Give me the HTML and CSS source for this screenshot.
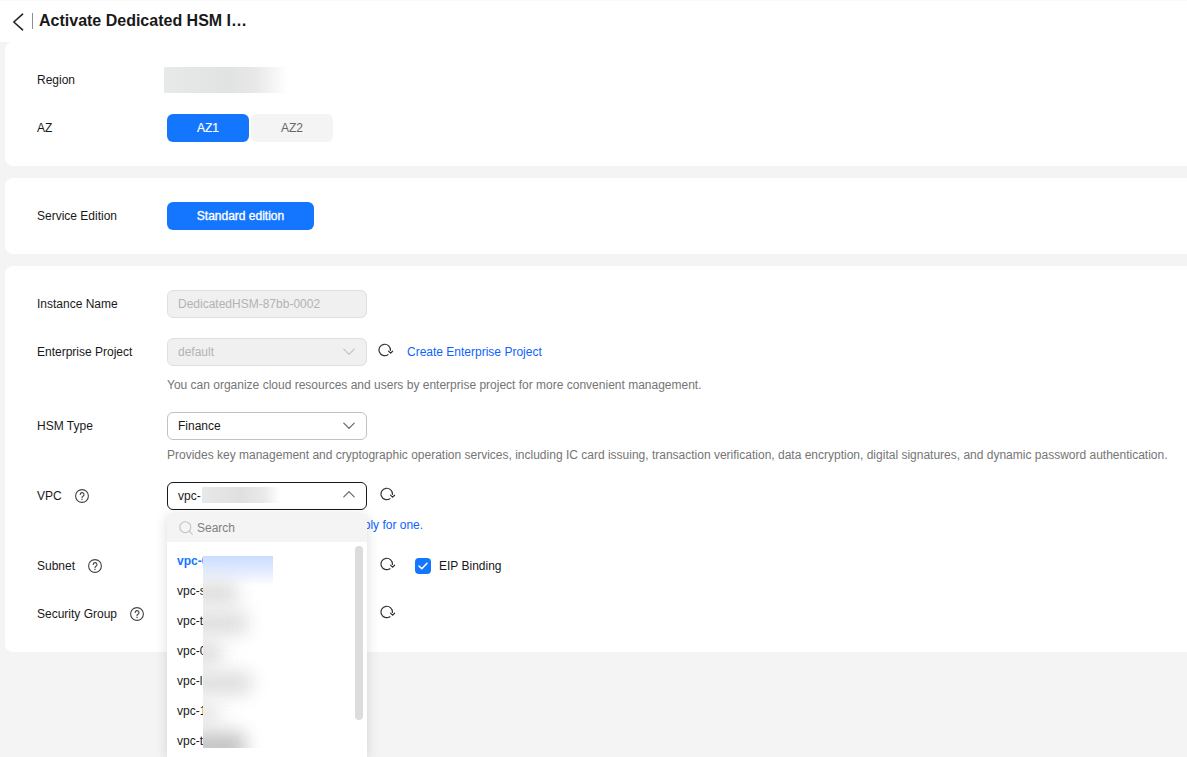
FILE: index.html
```html
<!DOCTYPE html>
<html lang="en">
<head>
<meta charset="utf-8">
<title>Activate Dedicated HSM Instance</title>
<link rel="stylesheet" href="styles.css">
</head>
<body>
<svg class="defs" width="0" height="0" aria-hidden="true">
  <symbol id="refresh" viewBox="0 0 16 16">
    <path d="M9.9 12.7A5.7 5.7 0 1 1 12.4 8.5" fill="none" stroke="currentColor" stroke-width="1.2" stroke-linecap="round"/>
    <path d="M10.5 9.2L12.5 11.2L14.6 9.2" fill="none" stroke="currentColor" stroke-width="1.2" stroke-linecap="round" stroke-linejoin="round"/>
  </symbol>
  <symbol id="down" viewBox="0 0 12 8">
    <path d="M.8 1.2L6 6.4L11.2 1.2" fill="none" stroke="currentColor" stroke-width="1.2" stroke-linecap="round" stroke-linejoin="round"/>
  </symbol>
  <symbol id="help" viewBox="0 0 14 14">
    <circle cx="7" cy="7" r="6.4" fill="none" stroke="currentColor" stroke-width="1.1"/>
    <path d="M5.2 5.5A1.9 1.9 0 1 1 8 7.2C7.3 7.6 7 8 7 8.7" fill="none" stroke="currentColor" stroke-width="1.1" stroke-linecap="round"/>
    <circle cx="7" cy="10.4" r=".7" fill="currentColor"/>
  </symbol>
</svg>

<header class="topbar">
  <svg class="back" width="12" height="18" viewBox="0 0 12 18"><path d="M10.6 1.2L1.8 9L10.6 16.8" fill="none" stroke="currentColor" stroke-width="1.6" stroke-linecap="round" stroke-linejoin="round"/></svg>
  <span class="divider"></span>
  <h1 class="title">Activate Dedicated HSM Instance</h1>
</header>

<main class="page">
  <section class="card">
    <div class="row">
      <div class="label">Region</div>
      <div class="region-mask"></div>
    </div>
    <div class="row">
      <div class="label">AZ</div>
      <div class="segments">
        <button class="seg seg-on">AZ1</button>
        <button class="seg">AZ2</button>
      </div>
    </div>
  </section>

  <section class="card">
    <div class="row">
      <div class="label">Service Edition</div>
      <button class="seg seg-on seg-wide">Standard edition</button>
    </div>
  </section>

  <section class="card">
    <div class="row">
      <div class="label">Instance Name</div>
      <div class="field field-off">DedicatedHSM-87bb-0002</div>
    </div>

    <div class="item">
      <div class="row">
        <div class="label">Enterprise Project</div>
        <div class="field field-off">default<svg class="caret"><use href="#down"/></svg></div>
        <svg class="refresh refresh-near"><use href="#refresh"/></svg>
        <a class="link create">Create Enterprise Project</a>
      </div>
      <p class="help help-wide">You can organize cloud resources and users by enterprise project for more convenient management.</p>
    </div>

    <div class="item">
      <div class="row">
        <div class="label">HSM Type</div>
        <div class="field">Finance<svg class="caret"><use href="#down"/></svg></div>
      </div>
      <p class="help">Provides key management and cryptographic operation services, including IC card issuing, transaction verification, data encryption, digital signatures, and dynamic password authentication.</p>
    </div>

    <div class="item">
      <div class="row">
        <div class="label">VPC<svg class="qmark"><use href="#help"/></svg></div>
        <div class="field field-open">vpc-<span class="vpc-mask"></span><svg class="caret caret-up"><use href="#down"/></svg>
          <div class="dropdown">
            <div class="search">
              <svg class="search-icon" width="14" height="14" viewBox="0 0 14 14"><circle cx="6.3" cy="6.3" r="5.5" fill="none" stroke="currentColor" stroke-width="1.1"/><path d="M10.3 10.3L13.2 13.2" stroke="currentColor" stroke-width="1.1" stroke-linecap="round"/></svg>
              Search
            </div>
            <ul class="options">
              <li class="option option-on">vpc-0</li>
              <li class="option">vpc-s</li>
              <li class="option">vpc-t</li>
              <li class="option">vpc-0</li>
              <li class="option">vpc-l</li>
              <li class="option">vpc-1</li>
              <li class="option">vpc-t</li>
            </ul>
            <div class="thumb"></div>
            <div class="blur-mask">
              <div class="tint"></div>
              <div class="blob b1"></div>
              <div class="blob b2"></div>
              <div class="blob b3"></div>
              <div class="blob b4"></div>
              <div class="blob b5"></div>
              <div class="blob b6"></div>
            </div>
          </div>
        </div>
        <svg class="refresh"><use href="#refresh"/></svg>
      </div>
      <p class="help help-link">No VPC is available? click here to apply for one.</p>
    </div>

    <div class="row">
      <div class="label">Subnet<svg class="qmark"><use href="#help"/></svg></div>
      <div class="field"></div>
      <svg class="refresh"><use href="#refresh"/></svg>
      <label class="check">
        <span class="box"><svg width="10" height="8" viewBox="0 0 10 8"><path d="M1 4L3.8 6.8L9 1.2" fill="none" stroke="#fff" stroke-width="1.5" stroke-linecap="round" stroke-linejoin="round"/></svg></span>
        EIP Binding
      </label>
    </div>

    <div class="row">
      <div class="label">Security Group<svg class="qmark"><use href="#help"/></svg></div>
      <div class="field"></div>
      <svg class="refresh"><use href="#refresh"/></svg>
    </div>
  </section>
</main>
</body>
</html>
```

FILE: styles.css
```css
* { box-sizing: border-box; }

html, body { height: 100%; }

body {
  margin: 0;
  overflow: hidden;
  background: #f4f4f4;
  color: #191919;
  font: 12px/20px "Liberation Sans", Arial, sans-serif;
}

.defs { display: block; height: 0; }

.topbar {
  display: flex;
  align-items: center;
  height: 42px;
  padding: 0 0 0 12px;
  background: #fff;
  border-top: 1px solid #fafafa;
}

.back { color: #222; flex: none; }

.divider {
  width: 1px;
  height: 16px;
  margin: -1px 6px 0 8px;
  background: #8f8f8f;
}

.title {
  width: 209px;
  margin: 0 0 2px;
  overflow: hidden;
  font-size: 16px;
  font-weight: 700;
  line-height: 20px;
  text-overflow: ellipsis;
  white-space: nowrap;
}

.page {
  display: flex;
  flex-direction: column;
  gap: 12px;
  padding-left: 5px;
}

.card {
  display: flex;
  flex-direction: column;
  gap: 20px;
  width: 1200px;
  padding: 24px 32px;
  background: #fff;
  border-radius: 8px;
}

.row {
  display: flex;
  align-items: center;
  height: 28px;
}

.label {
  display: flex;
  align-items: center;
  flex: none;
  width: 130px;
}

.qmark {
  flex: none;
  width: 14px;
  height: 14px;
  margin-left: 13px;
  color: #444;
}

.region-mask {
  width: 126px;
  height: 26px;
  margin-left: -3px;
  background: linear-gradient(90deg, #e8e9e9 0%, #e1e2e2 50%, #e8e8e8 72%, #fff 98%);
}

.segments { display: flex; gap: 2px; }

.seg {
  width: 82px;
  height: 28px;
  padding: 0;
  border: 0;
  border-radius: 6px;
  background: #f4f4f4;
  color: #666;
  font: inherit;
}

.seg-on {
  background: #1476ff;
  color: #fff;
  -webkit-text-stroke: .2px #fff;
}

.seg-wide { width: 147px; -webkit-text-stroke: .35px #fff; }

.field {
  position: relative;
  display: flex;
  align-items: center;
  flex: none;
  width: 200px;
  height: 28px;
  padding: 0 10px;
  border: 1px solid #c2c2c2;
  border-radius: 6px;
  background: #fff;
}

.field-off {
  border-color: #dfdfdf;
  background: #f0f0f0;
  color: #b3b3b3;
}

.field-off .caret { color: #c2c2c2; }

.field-open { border-color: #191919; }

.caret {
  position: absolute;
  top: 9px;
  right: 11px;
  width: 12px;
  height: 8px;
  color: #666;
}

.caret-up { top: 7px; transform: scaleY(-1); }

.vpc-mask {
  position: absolute;
  top: 4px;
  left: 34px;
  width: 78px;
  height: 16px;
  background: linear-gradient(90deg, #e8e8e8 0%, #e0e0e0 50%, #eaeaea 80%, #fff 100%);
}

.refresh {
  flex: none;
  width: 16px;
  height: 16px;
  margin: -4px 0 0 13px;
  color: #333;
}

.refresh-near { margin-left: 11px; }

.link { color: #0f62ff; }

.create { margin-left: 13px; }

.item { display: flex; flex-direction: column; }

.help {
  margin: 5px 0 -3px 130px;
  color: #757575;
  white-space: nowrap;
}

.help-wide { margin-top: 9px; margin-bottom: -3px; }

.help-link { margin-top: 5px; margin-bottom: -3px; color: #0f62ff; }

.check {
  display: flex;
  align-items: center;
  gap: 8px;
  margin-left: 19px;
}

.box {
  display: flex;
  align-items: center;
  justify-content: center;
  width: 16px;
  height: 16px;
  border-radius: 4px;
  background: #1476ff;
}

.dropdown {
  position: absolute;
  top: 31px;
  left: -1px;
  z-index: 5;
  width: 200px;
  height: 243px;
  overflow: hidden;
  background: #fff;
  box-shadow: 0 2px 12px rgba(0, 0, 0, .14);
  color: #191919;
}

.search {
  display: flex;
  align-items: center;
  gap: 4px;
  height: 28px;
  padding-left: 12px;
  background: #f4f4f4;
  color: #808080;
}

.search-icon { color: #c2c2c2; }

.options {
  margin: 0;
  padding: 4px 0 0;
  list-style: none;
}

.option {
  height: 30px;
  padding-left: 10px;
  line-height: 30px;
}

.option-on { color: #1476ff; font-weight: 700; }

.thumb {
  position: absolute;
  top: 32px;
  right: 4px;
  width: 8px;
  height: 174px;
  border-radius: 4px;
  background: #dcdcdc;
}

.blur-mask {
  position: absolute;
  top: 42px;
  left: 36px;
  width: 110px;
  height: 192px;
  overflow: hidden;
  background: #fff;
}

.tint {
  position: absolute;
  top: 0;
  left: 0;
  width: 70px;
  height: 30px;
  background: linear-gradient(180deg, #cbdcff 0%, #e2ecff 50%, #fff 100%);
}

.blob {
  position: absolute;
  left: -14px;
  height: 22px;
  background: #dcdcdc;
  filter: blur(9px);
}

.b1 { top: 26px; width: 48px; }
.b2 { top: 56px; width: 58px; }
.b3 { top: 86px; width: 32px; }
.b4 { top: 116px; width: 62px; }
.b5 { top: 146px; width: 30px; background: #e6e6e6; }
.b6 { top: 176px; width: 56px; height: 30px; background: #c4c4c4; }
```
